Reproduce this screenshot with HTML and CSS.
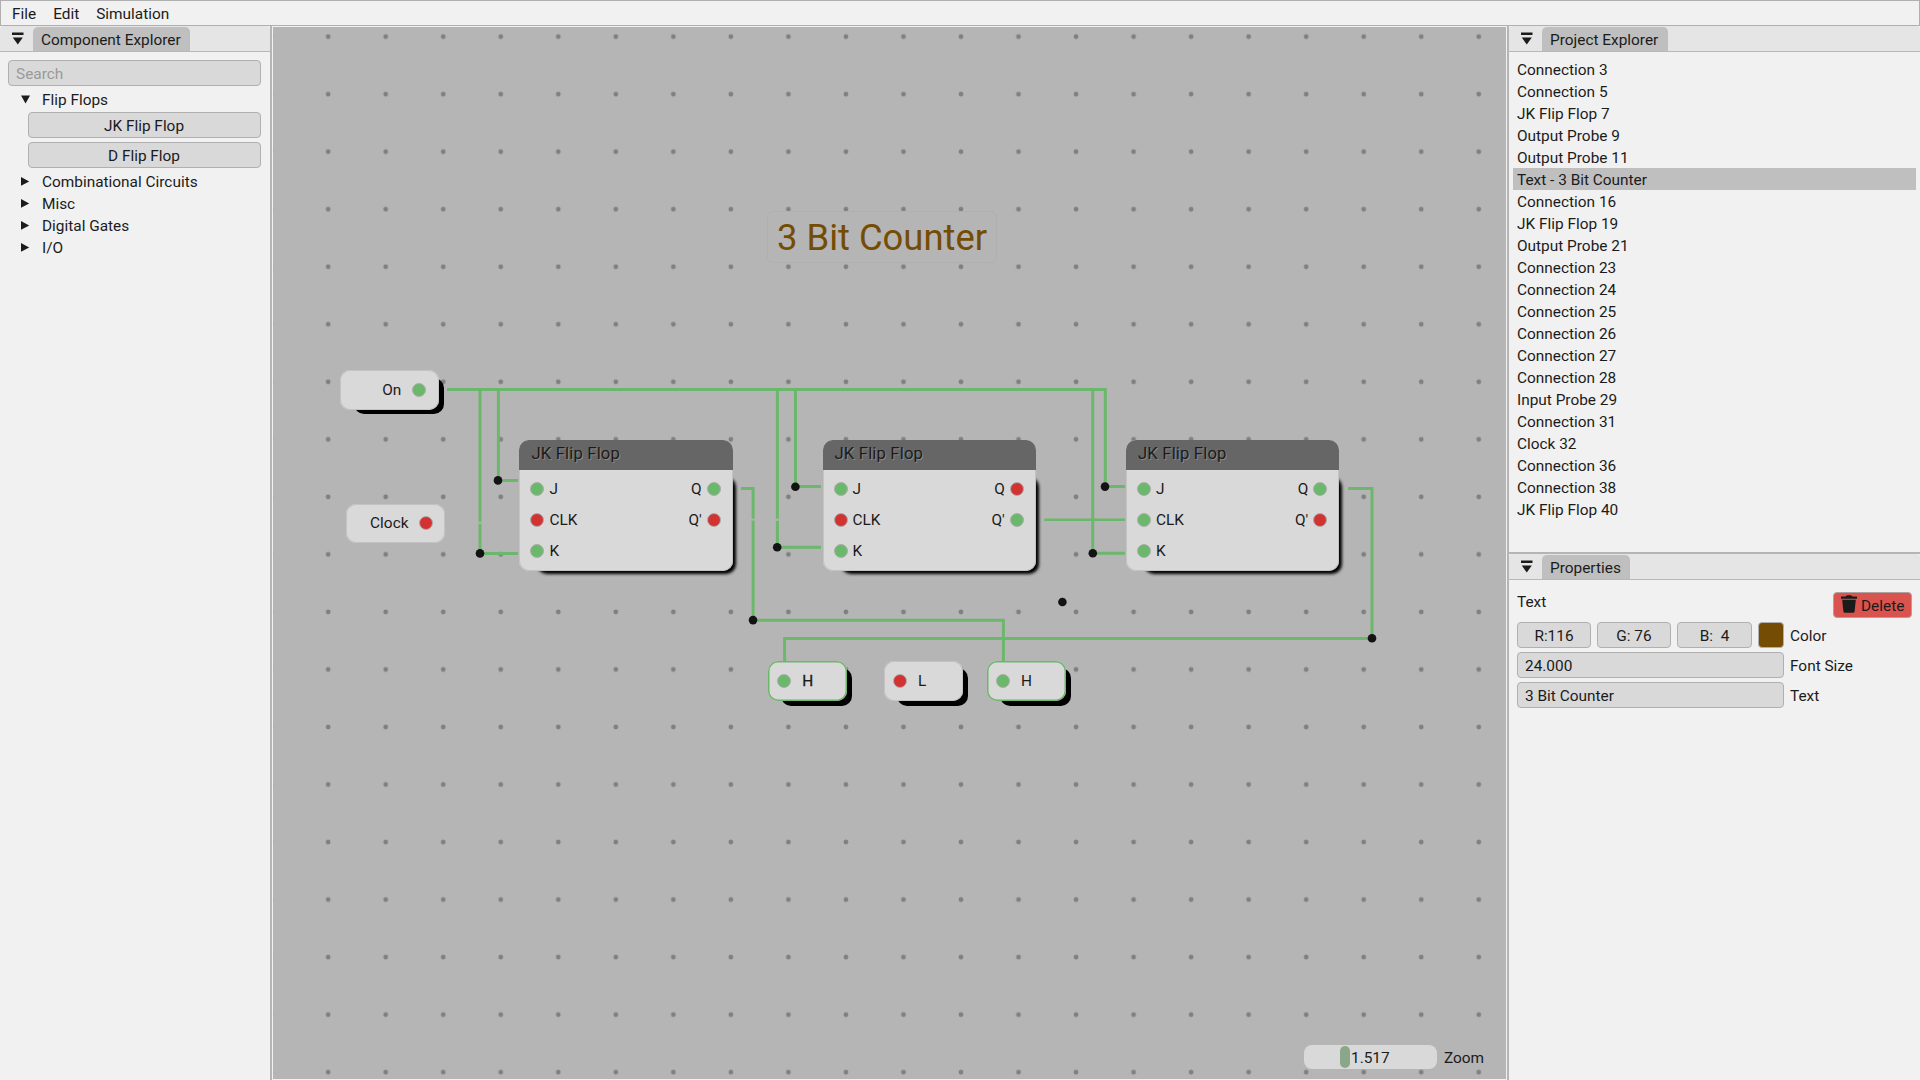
FILE: index.html
```html
<!DOCTYPE html>
<html lang="en">
<head>
<meta charset="utf-8">
<title>Circuit Simulator</title>
<link rel="stylesheet" href="styles.css">
</head>
<body>
<div class="app">
  <nav class="menubar"><span>File</span><span>Edit</span><span>Simulation</span></nav>
  <div class="workspace">
    <aside class="panel panel-left">
      <header class="tabbar">
        <svg class="collapse" width="12" height="13" viewBox="0 0 12 13"><path d="M0 .5h11.5v2.6H0zM.8 5.6h10L5.8 12.6z"/></svg>
        <span class="tab">Component Explorer</span>
      </header>
      <div class="explorer">
        <div class="field search">Search</div>
        <div class="tree open"><svg width="9" height="9" viewBox="0 0 9 9"><path d="M0 .5h9L4.5 8.5z"/></svg>Flip Flops</div>
        <div class="children">
          <button class="field">JK Flip Flop</button>
          <button class="field">D Flip Flop</button>
        </div>
        <div class="tree"><svg width="9" height="9" viewBox="0 0 9 9"><path d="M0 0v8.8L8.2 4.4z"/></svg>Combinational Circuits</div>
        <div class="tree"><svg width="9" height="9" viewBox="0 0 9 9"><path d="M0 0v8.8L8.2 4.4z"/></svg>Misc</div>
        <div class="tree"><svg width="9" height="9" viewBox="0 0 9 9"><path d="M0 0v8.8L8.2 4.4z"/></svg>Digital Gates</div>
        <div class="tree"><svg width="9" height="9" viewBox="0 0 9 9"><path d="M0 0v8.8L8.2 4.4z"/></svg>I/O</div>
      </div>
    </aside>
    <main class="canvas">
      <svg class="layer" viewBox="273 27 1233 1052">
        <defs>
          <pattern id="grid" x="299.4" y="7.9" width="57.53" height="57.53" patternUnits="userSpaceOnUse"><circle cx="28.77" cy="28.77" r="2.4" fill="#808080"/></pattern>
        </defs>
        <rect x="273" y="27" width="1233" height="1052" fill="url(#grid)"/>
        <g class="wires">
          <path d="M447 389.5H1105.3V486.5H1125"/>
          <path d="M498.4 389.5V480.4H518"/>
          <path d="M480 389.5V553.4H518"/>
          <path d="M795.5 389.5V486.5H821"/>
          <path d="M777.4 389.5V547.3H821"/>
          <path d="M1092.7 389.5V553.3H1125"/>
          <path class="thin" d="M1044.3 519.8H1125"/>
          <path d="M741 488.4H753.1V620.3H1003.4V662"/>
          <path d="M1348 488.4H1372V638.4H784.6V662"/>
        </g>
        <g class="gaps"><path d="M477 522.8h6M774 519.7h6M750 519.6h6"/></g>
        <g class="joints">
          <circle cx="498" cy="480.4" r="4.3"/><circle cx="480" cy="553.4" r="4.3"/>
          <circle cx="795.4" cy="486.7" r="4.3"/><circle cx="777.2" cy="547.3" r="4.3"/>
          <circle cx="1105" cy="486.6" r="4.3"/><circle cx="1092.8" cy="553.3" r="4.3"/>
          <circle cx="753" cy="620.1" r="4.3"/><circle cx="1372" cy="638.3" r="4.3"/>
          <circle cx="1062.4" cy="602" r="4.3"/>
        </g>
      </svg>

      <div class="label">3 Bit Counter</div>

      <div class="node source on"><i class="shadow"></i><div class="body"><span>On</span><i class="pin high"></i></div></div>
      <div class="node source clock"><div class="body"><span>Clock</span><i class="pin low"></i></div></div>

      <div class="node flipflop ff1"><i class="shadow"></i><div class="body"><h3>JK Flip Flop</h3>
        <div class="row"><i class="pin high"></i><span>J</span><span class="out">Q</span><i class="pin high"></i></div>
        <div class="row"><i class="pin low"></i><span>CLK</span><span class="out">Q'</span><i class="pin low"></i></div>
        <div class="row"><i class="pin high"></i><span>K</span></div></div></div>
      <div class="node flipflop ff2"><i class="shadow"></i><div class="body"><h3>JK Flip Flop</h3>
        <div class="row"><i class="pin high"></i><span>J</span><span class="out">Q</span><i class="pin low"></i></div>
        <div class="row"><i class="pin low"></i><span>CLK</span><span class="out">Q'</span><i class="pin high"></i></div>
        <div class="row"><i class="pin high"></i><span>K</span></div></div></div>
      <div class="node flipflop ff3"><i class="shadow"></i><div class="body"><h3>JK Flip Flop</h3>
        <div class="row"><i class="pin high"></i><span>J</span><span class="out">Q</span><i class="pin high"></i></div>
        <div class="row"><i class="pin high"></i><span>CLK</span><span class="out">Q'</span><i class="pin low"></i></div>
        <div class="row"><i class="pin high"></i><span>K</span></div></div></div>

      <div class="node probe p1 lit"><i class="shadow"></i><div class="body"><i class="pin high"></i><span class="strong">H</span></div></div>
      <div class="node probe p2"><i class="shadow"></i><div class="body"><i class="pin low"></i><span>L</span></div></div>
      <div class="node probe p3 lit"><i class="shadow"></i><div class="body"><i class="pin high"></i><span>H</span></div></div>

      <div class="zoom"><div class="slider"><i></i><span>1.517</span></div><span>Zoom</span></div>
    </main>
    <aside class="panel panel-right">
      <section class="project">
        <header class="tabbar">
          <svg class="collapse" width="12" height="13" viewBox="0 0 12 13"><path d="M0 .5h11.5v2.6H0zM.8 5.6h10L5.8 12.6z"/></svg>
          <span class="tab">Project Explorer</span>
        </header>
        <ul class="items">
          <li>Connection 3</li><li>Connection 5</li><li>JK Flip Flop 7</li><li>Output Probe 9</li><li>Output Probe 11</li>
          <li class="selected">Text - 3 Bit Counter</li>
          <li>Connection 16</li><li>JK Flip Flop 19</li><li>Output Probe 21</li><li>Connection 23</li><li>Connection 24</li>
          <li>Connection 25</li><li>Connection 26</li><li>Connection 27</li><li>Connection 28</li><li>Input Probe 29</li>
          <li>Connection 31</li><li>Clock 32</li><li>Connection 36</li><li>Connection 38</li><li>JK Flip Flop 40</li>
        </ul>
      </section>
      <section class="properties">
        <header class="tabbar">
          <svg class="collapse" width="12" height="13" viewBox="0 0 12 13"><path d="M0 .5h11.5v2.6H0zM.8 5.6h10L5.8 12.6z"/></svg>
          <span class="tab">Properties</span>
        </header>
        <div class="props">
          <div class="head"><span>Text</span><button class="delete"><svg width="16" height="18" viewBox="0 0 16 18"><path d="M0 1.6h4.6L6 .2h4L11.4 1.6H16v2.2H0zM1.2 4.8h13.6L13.6 16.4q-.2 1.4-1.6 1.4H4q-1.4 0-1.6-1.4z"/></svg>Delete</button></div>
          <div class="prop"><div class="rgb"><div class="field">R:116</div><div class="field">G: 76</div><div class="field">B: &nbsp;4</div><div class="field swatch"></div></div><span>Color</span></div>
          <div class="prop"><div class="field">24.000</div><span>Font Size</span></div>
          <div class="prop"><div class="field">3 Bit Counter</div><span>Text</span></div>
        </div>
      </section>
    </aside>
  </div>
</div>
</body>
</html>
```
FILE: styles.css
```css
* { box-sizing: border-box; }
body { margin: 0; background: #f1f1f1; color: #1b1b1b; font: 15.4px/22px Roboto, "Liberation Sans", sans-serif; }
.app { display: flex; flex-direction: column; width: 1920px; height: 1080px; overflow: hidden; }
.menubar { display: flex; gap: 17px; height: 26px; padding: 2px 11px; border: 1px solid #b0b0b0; white-space: nowrap; }
.workspace { display: flex; flex: 1; min-height: 0; }
.panel { background: #f1f1f1; }
.panel-left { width: 272px; border-right: 2px solid #b5b5b5; }
.panel-right { width: 413px; border-left: 2px solid #b5b5b5; }
.tabbar { display: flex; gap: 9px; height: 26px; padding: 1px 0 0 12px; background: #e5e5e5; border-bottom: 1px solid #b8b8b8; border-radius: 4px 4px 0 0; }
.collapse { margin-top: 5px; fill: #1b1b1b; }
.tab { height: 24px; padding: 2px 9.5px 0 8px; background: #bfbfbf; border-radius: 5px 5px 0 0; white-space: nowrap; }
.field { display: block; height: 26px; padding: 1px 7px 0; border: 1px solid #b0b0b0; border-radius: 4px; background: #d9d9d9; color: #1b1b1b; font: inherit; line-height: 24px; white-space: pre; }
.explorer { padding: 8px 9px 0 8px; }
.search { color: #999; margin-bottom: 2px; }
.tree { display: flex; align-items: center; gap: 12px; height: 22px; padding-left: 13px; }
.tree svg { fill: #1b1b1b; margin-top: -2px; }
.tree.open { height: 24px; }
.children { display: flex; flex-direction: column; gap: 4px; padding-left: 20px; margin-bottom: 3px; }
.children .field { text-align: center; padding: 1px 8px 1px 7px; }

.canvas { position: relative; width: 1235px; border: 1px solid #f1f1f1; background: #b5b5b5; overflow: hidden; }
.layer { display: block; width: 1233px; height: 1052px; }
.wires path { fill: none; stroke: #6bb76b; stroke-width: 3; }
.wires .thin { stroke-width: 2.4; }
.gaps path { stroke: #b5b5b5; stroke-width: 2.4; opacity: .8; }
.joints circle { fill: #131313; }
.label { position: absolute; left: 494px; top: 184px; width: 230px; height: 52px; border: 1px solid #b0b0b0; border-radius: 6px; background: #b5b5b5; color: #744c04; font-size: 36.4px; line-height: 52px; padding-left: 9px; white-space: nowrap; }

.node { position: absolute; }
.shadow { position: absolute; background: #000; border-radius: 10px; filter: blur(.6px); }
.body { position: relative; width: 100%; height: 100%; border-radius: 10px; background: #d9d9d9; box-shadow: inset 0 0 0 1px #c3c3c3; overflow: hidden; }
.pin { flex: none; width: 14px; height: 14px; border: 1px solid #adadad; border-radius: 50%; }
.pin.high { background: #6bb76b; }
.pin.low { background: #d23232; }
.source .body { display: flex; align-items: center; justify-content: flex-end; gap: 11px; padding-right: 13px; }
.on { left: 66.5px; top: 343px; width: 99.8px; height: 39.5px; }
.on .shadow { left: 14px; top: 8px; right: -5px; bottom: -4px; }
.clock { left: 72.5px; top: 476.5px; width: 99px; height: 39px; }
.clock .body { gap: 10px; padding-right: 12px; }
.flipflop { top: 412.6px; width: 213.3px; height: 131px; }
.flipflop .shadow { left: 18px; top: 37px; right: -3px; bottom: -3px; filter: blur(1.5px); }
.ff1 { left: 246.4px; }
.ff2 { left: 549.5px; }
.ff3 { left: 853px; }
.flipflop h3 { height: 30px; margin: 0 0 3.5px; padding: 4px 0 0 12px; background: #666; font-size: 16.7px; font-weight: 400; line-height: 20px; letter-spacing: .15px; text-shadow: 1px 1px 0 #888; }
.row { display: flex; align-items: center; gap: 5px; height: 31px; padding: 0 12px 0 11px; }
.row .out { margin-left: auto; }
.probe { top: 634px; width: 78.5px; height: 39.5px; }
.probe .shadow { left: 13px; top: 7px; right: -5px; bottom: -5px; }
.probe .body { display: flex; align-items: center; gap: 11px; padding-left: 9px; }
.lit .body { box-shadow: inset 0 0 0 1.5px #6bb76b; }
.p1 { left: 495.3px; }
.p2 { left: 611px; }
.p3 { left: 714px; }
.strong { -webkit-text-stroke: .3px #1b1b1b; }
.zoom { position: absolute; left: 1031px; top: 1018px; display: flex; gap: 7px; line-height: 26px; }
.slider { position: relative; width: 133px; height: 24px; border-radius: 8px; background: #d9d9d9; }
.slider i { position: absolute; left: 36px; top: 1px; width: 10px; height: 22px; border-radius: 5px; background: #8aa78a; }
.slider span { position: absolute; left: 47px; }

.project { height: 526px; }
.items { margin: 0; padding: 6px 4px 0; list-style: none; }
.items li { height: 22px; padding-left: 4px; line-height: 24px; }
.items .selected { background: #bfbfbf; }
.properties { border-top: 2px solid #b5b5b5; }
.props { display: flex; flex-direction: column; gap: 4px; padding: 12px 8px 0; }
.head { display: flex; justify-content: space-between; line-height: 20px; }
.delete { display: flex; align-items: center; gap: 4px; width: 79px; height: 26px; padding: 1px 7px 0; border: 1px solid #b0a0a0; border-radius: 4px; background: #d9534f; color: #1b1b1b; font: inherit; }
.delete svg { flex: none; fill: #1b1b1b; margin-top: -4px; }
.prop { display: flex; gap: 6px; line-height: 28px; height: 26px; }
.prop > .field, .rgb { width: 267px; }
.rgb { display: grid; grid-template-columns: 74px 74px 75px 26px; gap: 6px; }
.rgb .field { text-align: center; padding-left: 5px; padding-right: 5px; }
.rgb .swatch { background: #744c04; }
```
